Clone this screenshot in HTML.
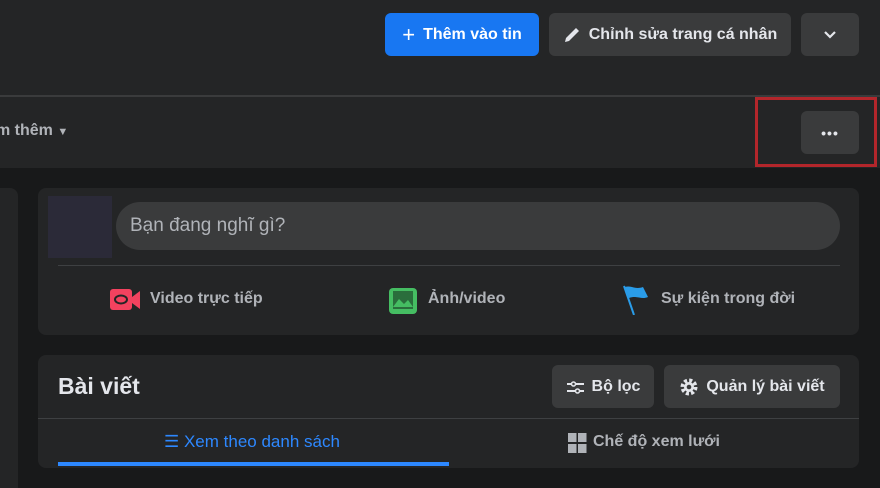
<!DOCTYPE html>
<html><head><meta charset="utf-8"><style>
*{margin:0;padding:0;box-sizing:border-box}
body{width:880px;height:482px;overflow:hidden;background:#18191a;font-family:"Liberation Sans",sans-serif;position:relative;color:#e4e6eb}
.a{position:absolute}
.btn{position:absolute;border-radius:6px;background:#3a3b3c;display:flex;align-items:center;justify-content:center;font-weight:bold;font-size:16px;color:#e4e6eb}
.t{position:absolute;font-size:16px;font-weight:bold;color:#b0b3b8;white-space:nowrap}
</style></head><body>
<div class="a" style="left:0;top:0;width:880px;height:168px;background:#242526"></div>
<div class="a" style="left:0;top:95px;width:880px;height:2px;background:#3a3b3c"></div>
<div class="btn" style="left:385px;top:13px;width:154px;height:43px;background:#1877f2;color:#fff"><span style="font-size:22px;font-weight:normal;margin-right:8px">+</span>Thêm vào tin</div>
<div class="btn" style="left:549px;top:13px;width:242px;height:43px"><svg width="18" height="18" viewBox="0 0 18 18" style="margin-right:8px"><path d="M2 16l1-4L13 2l3 3L6 15z" fill="#e4e6eb"/></svg>Chỉnh sửa trang cá nhân</div>
<div class="btn" style="left:801px;top:13px;width:58px;height:43px"><svg width="14" height="10" viewBox="0 0 14 10"><path d="M2 2l5 5 5-5" stroke="#e4e6eb" stroke-width="2.2" fill="none"/></svg></div>
<div class="t" style="left:-4px;top:122px;font-size:16px">m thêm <span style="font-size:11px">▼</span></div>
<div class="btn" style="left:801px;top:111px;width:58px;height:43px;font-size:14px;letter-spacing:1px">•••</div>
<div class="a" style="left:755px;top:97px;width:122px;height:70px;border:3px solid #b3262b"></div>
<div class="a" style="left:0;top:188px;width:18px;height:300px;background:#242526;border-radius:0 8px 0 0"></div>
<div class="a" style="left:38px;top:188px;width:821px;height:147px;background:#242526;border-radius:8px"></div>
<div class="a" style="left:48px;top:196px;width:64px;height:62px;background:#2b2a38"></div>
<div class="a" style="left:116px;top:202px;width:724px;height:48px;background:#3a3b3c;border-radius:24px"></div>
<div class="a" style="left:130px;top:215px;font-size:19px;color:#b0b3b8">Bạn đang nghĩ gì?</div>
<div class="a" style="left:58px;top:265px;width:782px;height:1px;background:#3e4042"></div>
<svg class="a" style="left:110px;top:288px" width="32" height="24" viewBox="0 0 32 24"><rect x="0" y="1" width="22" height="21" rx="3" fill="#f3425f"/><path d="M22 9l8-6v18l-8-6z" fill="#f3425f"/><ellipse cx="11" cy="11.5" rx="6" ry="4" fill="none" stroke="#242526" stroke-width="2"/></svg>
<div class="t" style="left:150px;top:290px;color:#b0b3b8">Video trực tiếp</div>
<svg class="a" style="left:388px;top:287px" width="30" height="28" viewBox="0 0 30 28"><rect x="1" y="1" width="28" height="26" rx="4" fill="#45bd62"/><rect x="5" y="4" width="20" height="18" fill="#2a6e3c"/><path d="M5 20l6-8 5 5 4-4 5 7z" fill="#45bd62"/></svg>
<div class="t" style="left:428px;top:290px;color:#b0b3b8">Ảnh/video</div>
<svg class="a" style="left:622px;top:285px" width="32" height="30" viewBox="0 0 32 30"><path d="M2 1l10 29" stroke="#2a9ce8" stroke-width="2"/><path d="M3 2c6-2 10 3 18 0l5 10c-7 3-11-2-19 1z" fill="#2a9ce8"/></svg>
<div class="t" style="left:661px;top:290px;color:#b0b3b8">Sự kiện trong đời</div>
<div class="a" style="left:38px;top:355px;width:821px;height:113px;background:#242526;border-radius:8px"></div>
<div class="a" style="left:58px;top:373px;font-size:23px;font-weight:bold;color:#e4e6eb">Bài viết</div>
<div class="btn" style="left:552px;top:365px;width:102px;height:43px"><svg width="20" height="16" viewBox="0 0 20 16" style="margin-right:6px"><path d="M1 5h4M10 5h8M1 12h8M14 12h4" stroke="#e4e6eb" stroke-width="2"/><circle cx="7.5" cy="5" r="2" fill="none" stroke="#e4e6eb" stroke-width="1.5"/><circle cx="11.5" cy="12" r="2" fill="none" stroke="#e4e6eb" stroke-width="1.5"/></svg>Bộ lọc</div>
<div class="btn" style="left:664px;top:365px;width:176px;height:43px"><svg width="20" height="20" viewBox="0 0 20 20" style="margin-right:7px"><circle cx="10" cy="10" r="6.5" fill="none" stroke="#e4e6eb" stroke-width="4" stroke-dasharray="3 2.1"/><circle cx="10" cy="10" r="5" fill="#e4e6eb"/><circle cx="10" cy="10" r="2.3" fill="#3a3b3c"/></svg>Quản lý bài viết</div>
<div class="a" style="left:38px;top:418px;width:821px;height:1px;background:#3e4042"></div>
<div class="t" style="left:164px;top:432px;color:#2d88ff;font-weight:normal;font-size:17px">☰ Xem theo danh sách</div>
<div class="a" style="left:58px;top:462px;width:391px;height:4px;background:#2d88ff"></div>
<svg class="a" style="left:568px;top:433px" width="19" height="20" viewBox="0 0 19 20"><rect x="0" y="0" width="8.5" height="9" fill="#b0b3b8"/><rect x="10" y="0" width="8.5" height="9" fill="#b0b3b8"/><rect x="0" y="11" width="8.5" height="9" fill="#b0b3b8"/><rect x="10" y="11" width="8.5" height="9" fill="#b0b3b8"/></svg>
<div class="t" style="left:593px;top:433px">Chế độ xem lưới</div>
</body></html>
